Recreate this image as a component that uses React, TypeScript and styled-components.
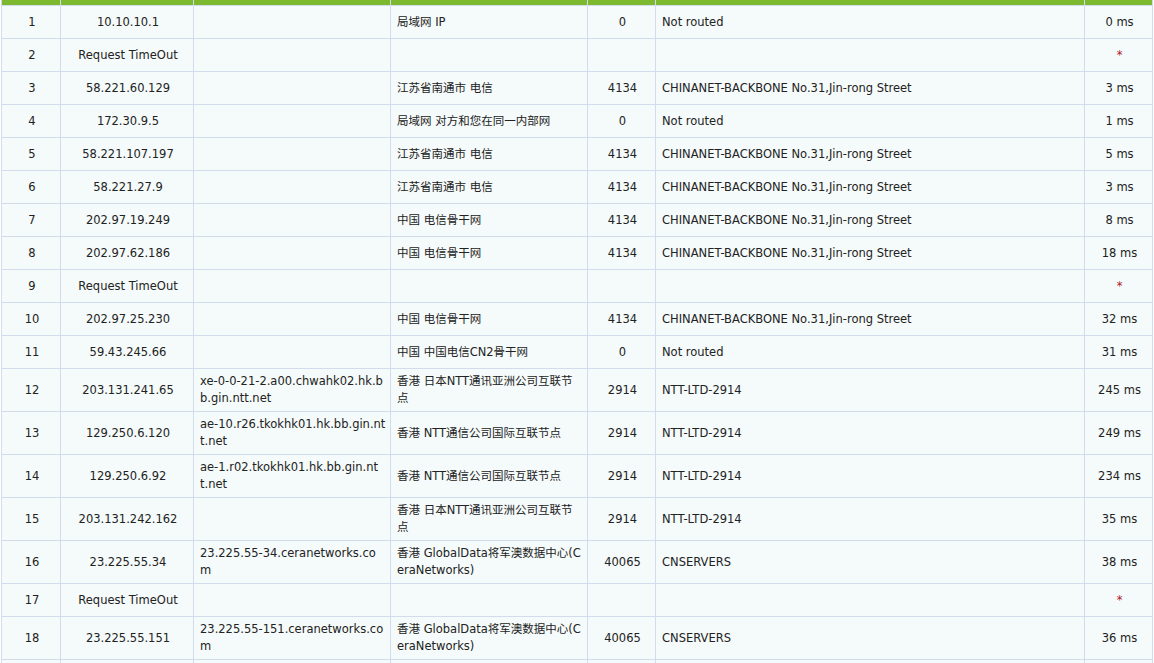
import React from "react";
import styled, { createGlobalStyle } from "styled-components";

const Global = createGlobalStyle`
  body { margin: 0; background: #fff; font-family: "DejaVu Sans", Verdana, "Noto Sans CJK SC", sans-serif; }
`;

type Hop = [string, string, string, string, string, string, string];

const hops: Hop[] = [
  ["1", "10.10.10.1", "", "局域网 IP", "0", "Not routed", "0 ms"],
  ["2", "Request TimeOut", "", "", "", "", "*"],
  ["3", "58.221.60.129", "", "江苏省南通市 电信", "4134", "CHINANET-BACKBONE No.31,Jin-rong Street", "3 ms"],
  ["4", "172.30.9.5", "", "局域网 对方和您在同一内部网", "0", "Not routed", "1 ms"],
  ["5", "58.221.107.197", "", "江苏省南通市 电信", "4134", "CHINANET-BACKBONE No.31,Jin-rong Street", "5 ms"],
  ["6", "58.221.27.9", "", "江苏省南通市 电信", "4134", "CHINANET-BACKBONE No.31,Jin-rong Street", "3 ms"],
  ["7", "202.97.19.249", "", "中国 电信骨干网", "4134", "CHINANET-BACKBONE No.31,Jin-rong Street", "8 ms"],
  ["8", "202.97.62.186", "", "中国 电信骨干网", "4134", "CHINANET-BACKBONE No.31,Jin-rong Street", "18 ms"],
  ["9", "Request TimeOut", "", "", "", "", "*"],
  ["10", "202.97.25.230", "", "中国 电信骨干网", "4134", "CHINANET-BACKBONE No.31,Jin-rong Street", "32 ms"],
  ["11", "59.43.245.66", "", "中国 中国电信CN2骨干网", "0", "Not routed", "31 ms"],
  ["12", "203.131.241.65", "xe-0-0-21-2.a00.chwahk02.hk.bb.gin.ntt.net", "香港 日本NTT通讯亚洲公司互联节点", "2914", "NTT-LTD-2914", "245 ms"],
  ["13", "129.250.6.120", "ae-10.r26.tkokhk01.hk.bb.gin.ntt.net", "香港 NTT通信公司国际互联节点", "2914", "NTT-LTD-2914", "249 ms"],
  ["14", "129.250.6.92", "ae-1.r02.tkokhk01.hk.bb.gin.ntt.net", "香港 NTT通信公司国际互联节点", "2914", "NTT-LTD-2914", "234 ms"],
  ["15", "203.131.242.162", "", "香港 日本NTT通讯亚洲公司互联节点", "2914", "NTT-LTD-2914", "35 ms"],
  ["16", "23.225.55.34", "23.225.55-34.ceranetworks.com", "香港 GlobalData将军澳数据中心(CeraNetworks)", "40065", "CNSERVERS", "38 ms"],
  ["17", "Request TimeOut", "", "", "", "", "*"],
  ["18", "23.225.55.151", "23.225.55-151.ceranetworks.com", "香港 GlobalData将军澳数据中心(CeraNetworks)", "40065", "CNSERVERS", "36 ms"],
  ["19", "", "", "", "", "", ""],
];

const widths = [59, 133, 197, 197, 68, 429, 68];
const centered = [true, true, false, false, true, false, true];

const Table = styled.table`
  margin-left: 1px;
  width: 1152px;
  border-collapse: collapse;
  table-layout: fixed;
  background: #f5fafa;
  font-size: 11.5px;
  color: #222;
`;

const HeadCell = styled.th`
  height: 5px;
  padding: 0;
  background: #7db92f;
  border: 1px solid #d2dcec;
  border-top: none;
`;

const Cell = styled.td<{ $center: boolean }>`
  border: 1px solid #d2dcec;
  padding: 4px 4px 4px 6px;
  line-height: 17px;
  height: 24px;
  text-align: ${(p) => (p.$center ? "center" : "left")};
  word-break: break-all;
  vertical-align: middle;
`;

const Star = styled.span`
  color: #b0202a;
`;

export default function App() {
  return (
    <>
      <Global />
      <Table>
        <colgroup>
          {widths.map((w, i) => (
            <col key={i} style={{ width: w }} />
          ))}
        </colgroup>
        <thead>
          <tr>
            {widths.map((_, i) => (
              <HeadCell key={i} />
            ))}
          </tr>
        </thead>
        <tbody>
          {hops.map((h, r) => (
            <tr key={r}>
              {h.map((v, i) => (
                <Cell key={i} $center={centered[i]}>
                  {v === "*" ? <Star>*</Star> : v}
                </Cell>
              ))}
            </tr>
          ))}
        </tbody>
      </Table>
    </>
  );
}
